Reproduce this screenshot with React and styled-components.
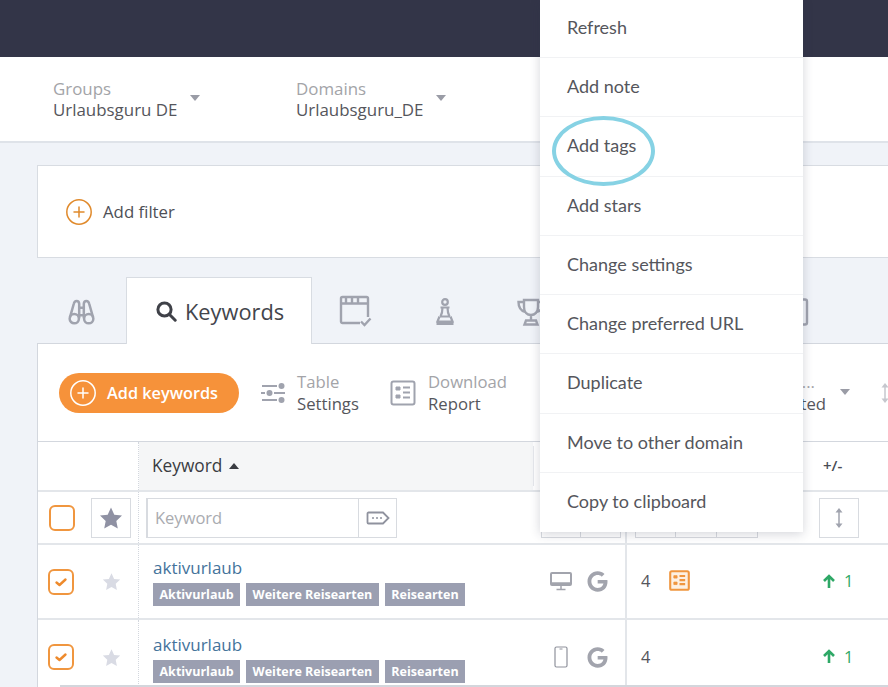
import styled, { createGlobalStyle } from 'styled-components';
import { FaGoogle } from 'react-icons/fa';

const GlobalStyle = createGlobalStyle`
  html, body {
    margin: 0;
    padding: 0;
    background: #f0f3f8;
  }
  body {
    font-family: "Open Sans", "Liberation Sans", sans-serif;
    color: #4a4c55;
  }
`;

const Page = styled.div`
  position: relative;
  width: 888px;
  height: 687px;
  overflow: hidden;
  background: #f0f3f8;
`;

const TopBar = styled.header`
  height: 57px;
  background: #333548;
`;

const SubHeader = styled.div`
  display: flex;
  box-sizing: border-box;
  height: 86px;
  padding: 21px 0 0 53px;
  background: #fff;
  border-bottom: 2px solid #dfe3e9;
`;

const Picker = styled.div`
  display: flex;
  width: 243px;
`;

const PickerText = styled.div`
  display: flex;
  flex-direction: column;
  font-size: 16.9px;
  line-height: 21px;
`;

const PickerLabel = styled.span`
  color: #a3a4a8;
`;

const PickerValue = styled.span`
  color: #55565c;
`;

const Caret = styled.span`
  width: 0;
  height: 0;
  margin: ${p => p.$top || 17}px 0 0 ${p => p.$left || 13}px;
  border-left: 5px solid transparent;
  border-right: 5px solid transparent;
  border-top: 6px solid #9a9ca6;
`;

const FilterCard = styled.section`
  display: flex;
  align-items: center;
  gap: 11px;
  box-sizing: border-box;
  height: 93px;
  margin: 22px 0 0 37px;
  padding-left: 28px;
  background: #fff;
  border: 1px solid #d8dce2;
  border-right: 0;
  font-size: 16.8px;
  color: #4e5056;
`;

const Tabs = styled.nav`
  display: flex;
  align-items: flex-end;
  height: 66px;
  margin-top: 19px;
  padding-left: 37px;
`;

const IconTab = styled.div`
  display: flex;
  flex: none;
  justify-content: center;
  align-items: center;
  box-sizing: border-box;
  width: ${p => p.$width}px;
  height: 66px;
  padding-top: 3px;
`;

const ActiveTab = styled.div`
  position: relative;
  z-index: 1;
  display: flex;
  flex: none;
  align-items: center;
  gap: 8px;
  box-sizing: border-box;
  width: 186px;
  height: 67px;
  margin-bottom: -1px;
  padding: 0 0 0 29px;
  background: #fff;
  border: 1px solid #d8dce2;
  border-bottom: 0;
  font-size: 21.8px;
  color: #43454c;
`;

const Panel = styled.main`
  margin-left: 37px;
  background: #fff;
  border-top: 1px solid #d3d7de;
  border-left: 1px solid #d3d7de;
`;

const Toolbar = styled.div`
  display: flex;
  align-items: center;
  box-sizing: border-box;
  height: 97px;
  padding-left: 21px;
`;

const AddButton = styled.button`
  display: flex;
  align-items: center;
  gap: 11px;
  box-sizing: border-box;
  width: 180px;
  height: 40px;
  margin: 0 22px 0 0;
  padding: 0 0 0 11px;
  background: #f6923a;
  border: 0;
  border-radius: 20px;
  color: #fff;
  font: 600 16.3px "Open Sans", sans-serif;
`;

const ToolAction = styled.div`
  display: flex;
  align-items: center;
  gap: ${p => p.$gap || 12}px;
  width: ${p => p.$width}px;
`;

const ToolText = styled.div`
  display: flex;
  flex-direction: column;
  font-size: 16.7px;
  line-height: 22px;
`;

const ToolHint = styled.span`
  color: #a3a4a8;
`;

const ToolMain = styled.span`
  color: #55565c;
`;

const ToolRight = styled.div`
  display: flex;
  align-items: center;
  margin-left: auto;
  margin-right: -2px;
`;

const Ghost = styled.div`
  display: flex;
  flex-direction: column;
  align-items: flex-end;
  font-size: 16.7px;
  line-height: 22px;
`;

const GhostDots = styled(ToolHint)`
  margin-right: 11px;
`;

const FaintSort = styled.span`
  display: flex;
  margin-left: 30px;
  opacity: 0.6;
`;

const TableRow = styled.div`
  display: grid;
  grid-template-columns: 101px 486px 1fr;
  box-sizing: border-box;
  height: ${p => p.$height}px;
  border-top: 2px solid #e3e6ea;
`;

const HeadRow = styled(TableRow)`
  border-top: 1px solid #d3d7de;
`;

const BaseCell = styled.div`
  display: flex;
  align-items: center;
  box-sizing: border-box;
`;

const MarkCell = styled(BaseCell)`
  border-right: 1px dotted #d3d7de;
`;

const HeadCell = styled(BaseCell)`
  position: relative;
  gap: 7px;
  padding: 0 0 2px 13px;
  background: linear-gradient(to right, #f5f6f7 394px, #fff 394px);
  font-size: 17.3px;
  color: #3a3c42;

  &::after {
    content: '';
    position: absolute;
    top: 4px;
    bottom: 4px;
    left: 394px;
    width: 1px;
    background: #e6e8ec;
  }
`;

const HeadEnd = styled(BaseCell)`
  padding: 0 0 2px 196px;
  border-left: 2px solid #e3e6ea;
  font-size: 15px;
  font-weight: 600;
  color: #4a4c55;
`;

const SortArrow = styled.span`
  width: 0;
  height: 0;
  margin-top: 2px;
  border-left: 5px solid transparent;
  border-right: 5px solid transparent;
  border-bottom: 6px solid #3a3c42;
`;

const CheckBox = styled.span`
  display: flex;
  justify-content: center;
  align-items: center;
  box-sizing: border-box;
  width: 26px;
  height: 26px;
  margin-left: ${p => p.$left}px;
  border: 2px solid #f0963f;
  border-radius: 6px;
`;

const StarBox = styled.span`
  display: flex;
  justify-content: center;
  align-items: center;
  box-sizing: border-box;
  width: 40px;
  height: 40px;
  margin-left: 16px;
  border: 1px solid #d8dbe0;
`;

const StarSlot = styled.span`
  display: flex;
  margin-left: 28px;
`;

const FilterCell = styled(BaseCell)`
  padding-left: 7px;
`;

const KeywordInput = styled.div`
  display: flex;
  align-items: center;
  box-sizing: border-box;
  width: 212px;
  height: 40px;
  padding: 0 0 1px 7px;
  border: 1px solid #d8dbe0;
  border-width: 1px 0 1px 2px;
  font-size: 16.5px;
  color: #a9abb0;
`;

const TagButton = styled.div`
  display: flex;
  justify-content: center;
  align-items: center;
  box-sizing: border-box;
  width: 39px;
  height: 40px;
  border: 1px solid #d8dbe0;
`;

const RangeBox = styled.div`
  box-sizing: border-box;
  width: ${p => p.$width}px;
  height: 40px;
  margin-left: ${p => p.$left || 0}px;
  border: 1px solid #d8dbe0;
  border-left-width: ${p => p.$left ? 1 : 0}px;
`;

const FilterEnd = styled(BaseCell)`
  padding-left: 7px;
  border-left: 2px solid #e3e6ea;
`;

const SortBox = styled.div`
  display: flex;
  justify-content: center;
  align-items: center;
  box-sizing: border-box;
  width: 40px;
  height: 40px;
  margin-left: 61px;
  border: 1px solid #d8dbe0;
`;

const KeywordCell = styled.div`
  position: relative;
  display: flex;
  flex-direction: column;
  padding: ${p => p.$top}px 0 0 14px;
`;

const KeywordLink = styled.a`
  font-size: 17px;
  line-height: 22px;
  color: #44739b;
`;

const TagList = styled.div`
  display: flex;
  gap: 6px;
  margin-top: 4px;
`;

const Tag = styled.span`
  padding: 0 6.5px;
  background: #9b9fb1;
  color: #fff;
  font-size: 12.5px;
  font-weight: 700;
  line-height: 23px;
`;

const Engine = styled.div`
  position: absolute;
  top: ${p => p.$top}px;
  right: 17px;
  display: flex;
  align-items: center;
  gap: 15px;
  color: #a2a4ad;
`;

const RankCell = styled(BaseCell)`
  padding: 0 0 2px 14px;
  border-left: 2px solid #e3e6ea;
  font-size: 16.5px;
  color: #55565c;
`;

const RankValue = styled.span`
  width: 28px;
`;

const Trend = styled.span`
  position: absolute;
  left: 823px;
  display: flex;
  align-items: center;
  gap: 9px;
  color: #2ea866;
`;

const Menu = styled.ul`
  position: absolute;
  top: 0;
  left: 540px;
  z-index: 5;
  width: 263px;
  margin: 0;
  padding: 0;
  list-style: none;
  background: #fff;
  box-shadow: 0 2px 10px rgba(40, 45, 70, 0.2);
`;

const MenuItem = styled.li`
  display: flex;
  align-items: center;
  box-sizing: border-box;
  height: 59.25px;
  padding: 0 0 2px 27px;
  border-top: 1px solid #f1f2f4;
  font-family: "Lato", "Open Sans", sans-serif;
  font-size: 18px;
  color: #55565c;

  &:first-child {
    height: 57px;
    padding-bottom: 3px;
    border-top: 0;
  }
  &:last-child {
    height: 60px;
  }
`;

const Highlight = styled.span`
  position: absolute;
  top: 116px;
  left: 552px;
  z-index: 6;
  box-sizing: border-box;
  width: 103px;
  height: 70px;
  border: 4px solid #86d2e4;
  border-radius: 50%;
`;

const BottomEdge = styled.span`
  position: absolute;
  left: 60px;
  right: 0;
  bottom: 0;
  height: 2px;
  background: #d3d6dc;
`;

function Star({ size, color }) {
  return (
    <svg width={size} height={size} viewBox="0 0 24 24" fill={color}>
      <path d="M12 1.5l3.3 7.2 7.7.9-5.7 5.3 1.5 7.7L12 18.8l-6.8 3.8 1.5-7.7L1 9.6l7.7-.9z" />
    </svg>
  );
}

function Tick() {
  return (
    <svg width="14" height="12" viewBox="0 0 14 12" fill="none" stroke="#ee8a2c" strokeWidth="2.4" strokeLinecap="round" strokeLinejoin="round">
      <path d="M2.5 6.5l3 2.5 6-5.5" />
    </svg>
  );
}

function PlusCircle({ color, size = 26 }) {
  return (
    <svg width={size} height={size} viewBox="0 0 26 26" fill="none" stroke={color} strokeWidth="1.5">
      <circle cx="13" cy="13" r="12.2" />
      <path d="M13 8v10M8 13h10" strokeLinecap="round" />
    </svg>
  );
}

function Binoculars() {
  return (
    <svg width="27" height="26" viewBox="0 0 28 27" fill="none" stroke="#a0a3ae" strokeWidth="2.6">
      <circle cx="6.5" cy="20.5" r="4.8" />
      <circle cx="21.5" cy="20.5" r="4.8" />
      <path d="M2 19L6 5q.6-3 3-3t2.6 3v15M26 19L22 5q-.6-3-3-3t-2.6 3v15M11.5 9h5M11.5 17h5" />
    </svg>
  );
}

function SearchIcon() {
  return (
    <svg width="21" height="21" viewBox="0 0 21 21" fill="none" stroke="#3f4148" strokeWidth="3">
      <circle cx="8.5" cy="8.5" r="6.6" />
      <path d="M13.5 13.5l5.7 5.7" strokeLinecap="round" />
    </svg>
  );
}

function BrowserCheck() {
  return (
    <svg width="33" height="33" viewBox="0 0 33 33" fill="none" stroke="#a0a3ae" strokeWidth="2.4">
      <path d="M21 28H3.500a1.500 1.500 0 0 1-1.500-1.500v-23A1.500 1.500 0 0 1 3.500 2h24A1.500 1.500 0 0 1 29 3.500V22" />
      <path d="M2 8.500h27M7 2v6.500M13 2v6.500M19 2v6.500" />
      <path d="M22 26.500l3.500 3.500 6-6.500" />
    </svg>
  );
}

function Pawn() {
  return (
    <svg width="20" height="28" viewBox="0 0 20 28" fill="none" stroke="#a0a3ae" strokeWidth="2.2">
      <circle cx="10" cy="4" r="2.800" />
      <path d="M5.500 9.500h9M7.500 9.500c0 3.500-.5 6-2 9M12.500 9.500c0 3.500.5 6 2 9M5 18.500h10" />
      <path d="M4.500 18.500l-2 5h15l-2-5" />
      <path d="M1.500 25.500h17" strokeWidth="3" />
    </svg>
  );
}

function Trophy() {
  return (
    <svg width="28" height="28" viewBox="0 0 28 28" fill="none" stroke="#a0a3ae" strokeWidth="2.4">
      <path d="M7 2h14v7c0 5-3 8-7 8s-7-3-7-8zM7 4H1.500c0 6 2.500 9 7 10M21 4h5.500c0 6-2.500 9-7 10M14 17v5" />
      <path d="M9 22.500h10l1.500 4h-13z" />
    </svg>
  );
}

function ClipTab() {
  return (
    <svg width="22" height="28" viewBox="0 0 22 28" fill="none" stroke="#a0a3ae" strokeWidth="2.4">
      <rect x="2" y="1.500" width="18" height="25" rx="2" />
    </svg>
  );
}

function Sliders() {
  return (
    <svg width="24" height="20" viewBox="0 0 24 20" fill="#a0a3ae" stroke="#a0a3ae">
      <path d="M1 3h15M1 17h15M0 10h4M13 10h11" strokeWidth="1.800" />
      <circle cx="20.500" cy="3" r="3" stroke="none" />
      <circle cx="8.500" cy="10" r="3" stroke="none" />
      <circle cx="20.500" cy="17" r="3" stroke="none" />
    </svg>
  );
}

function ReportIcon({ color = '#a0a3ae', size = 26, tint = 'none', strokeWidth = 2 }) {
  return (
    <svg width={size} height={size} viewBox="0 0 26 26" fill={tint} stroke={color} strokeWidth={strokeWidth}>
      <rect x="1.500" y="1.500" width="23" height="23" rx="2" />
      <path d="M6 7h4v3H6zM6 15h4v3H6z" fill={color} strokeWidth="1" />
      <path d="M13 7.500h7M13 12.500h7M13 17.500h7" fill="none" />
    </svg>
  );
}

function TagIcon() {
  return (
    <svg width="24" height="14" viewBox="0 0 24 14" fill="none" stroke="#8f929e" strokeWidth="1.800">
      <path d="M2.500 1.500h14.500l5.500 5.500-5.500 5.500H2.500a1 1 0 0 1-1-1v-9a1 1 0 0 1 1-1z" />
      <path d="M7 7h.01M11 7h.01M15 7h.01" strokeWidth="2" strokeLinecap="round" />
    </svg>
  );
}

function SortIcon() {
  return (
    <svg width="10" height="22" viewBox="0 0 10 22" fill="#a0a3ae" stroke="#a0a3ae">
      <path d="M5 3v16" strokeWidth="1.500" />
      <path d="M5 1l3.500 4.500h-7zM5 21l3.500-4.500h-7z" stroke="none" />
    </svg>
  );
}

function Desktop() {
  return (
    <svg width="22" height="19" viewBox="0 0 22 19" fill="none" stroke="#a2a4ad" strokeWidth="2">
      <rect x="1" y="1" width="20" height="12" rx="1" />
      <path d="M1 11.500h20" strokeWidth="2.500" />
      <path d="M11 14v3M6.500 17.500h9" strokeWidth="1.500" />
    </svg>
  );
}

function Phone() {
  return (
    <svg width="22" height="22" viewBox="0 0 22 22" fill="none" stroke="#8f929c" strokeWidth="1.200">
      <rect x="5" y="1" width="12" height="20" rx="1.500" />
      <path d="M9.500 3h3M11 18.500h.01" />
    </svg>
  );
}

function UpArrow() {
  return (
    <svg width="12" height="14" viewBox="0 0 12 14" fill="none" stroke="#2ea866" strokeWidth="2.600">
      <path d="M6 14V2M1 7l5-5 5 5" />
    </svg>
  );
}

const rows = [
  { id: 1, device: <Desktop />, height: 75, top: 12, engineTop: 26, note: true },
  { id: 2, device: <Phone />, height: 76, top: 14, engineTop: 26, note: false },
];

const tags = ['Aktivurlaub', 'Weitere Reisearten', 'Reisearten'];

const menuItems = [
  'Refresh',
  'Add note',
  'Add tags',
  'Add stars',
  'Change settings',
  'Change preferred URL',
  'Duplicate',
  'Move to other domain',
  'Copy to clipboard',
];

export default function App() {
  return (
    <Page>
      <GlobalStyle />
      <TopBar />
      <SubHeader>
        <Picker>
          <PickerText>
            <PickerLabel>Groups</PickerLabel>
            <PickerValue>Urlaubsguru DE</PickerValue>
          </PickerText>
          <Caret />
        </Picker>
        <Picker>
          <PickerText>
            <PickerLabel>Domains</PickerLabel>
            <PickerValue>Urlaubsguru_DE</PickerValue>
          </PickerText>
          <Caret />
        </Picker>
      </SubHeader>

      <FilterCard>
        <PlusCircle color="#e08a2c" />
        Add filter
      </FilterCard>

      <Tabs>
        <IconTab $width={89}><Binoculars /></IconTab>
        <ActiveTab><SearchIcon />Keywords</ActiveTab>
        <IconTab $width={87}><BrowserCheck /></IconTab>
        <IconTab $width={91}><Pawn /></IconTab>
        <IconTab $width={81}><Trophy /></IconTab>
        <IconTab $width={454}><ClipTab /></IconTab>
      </Tabs>

      <Panel>
        <Toolbar>
          <AddButton><PlusCircle color="#fff" />Add keywords</AddButton>
          <ToolAction $width={129}>
            <Sliders />
            <ToolText>
              <ToolHint>Table</ToolHint>
              <ToolMain>Settings</ToolMain>
            </ToolText>
          </ToolAction>
          <ToolAction>
            <ReportIcon />
            <ToolText>
              <ToolHint>Download</ToolHint>
              <ToolMain>Report</ToolMain>
            </ToolText>
          </ToolAction>
          <ToolRight>
            <Ghost>
              <GhostDots>...</GhostDots>
              <ToolMain>Selected</ToolMain>
            </Ghost>
            <Caret $top={-2} $left={14} />
            <FaintSort><SortIcon /></FaintSort>
          </ToolRight>
        </Toolbar>

        <HeadRow $height={49}>
          <MarkCell />
          <HeadCell>Keyword<SortArrow /></HeadCell>
          <HeadEnd>+/-</HeadEnd>
        </HeadRow>

        <TableRow $height={53}>
          <MarkCell>
            <CheckBox $left={11} />
            <StarBox><Star size={24} color="#8f91a3" /></StarBox>
          </MarkCell>
          <FilterCell>
            <KeywordInput>Keyword</KeywordInput>
            <TagButton><TagIcon /></TagButton>
            <RangeBox $width={40} $left={144} />
            <RangeBox $width={40} />
          </FilterCell>
          <FilterEnd>
            <RangeBox $width={41} $left={1} />
            <RangeBox $width={41} />
            <RangeBox $width={41} />
            <SortBox><SortIcon /></SortBox>
          </FilterEnd>
        </TableRow>

        {rows.map(row => (
          <TableRow key={row.id} $height={row.height}>
            <MarkCell>
              <CheckBox $left={10}><Tick /></CheckBox>
              <StarSlot><Star size={19} color="#d9dbe4" /></StarSlot>
            </MarkCell>
            <KeywordCell $top={row.top}>
              <KeywordLink>aktivurlaub</KeywordLink>
              <TagList>
                {tags.map(tag => <Tag key={tag}>{tag}</Tag>)}
              </TagList>
              <Engine $top={row.engineTop}>
                {row.device}
                <FaGoogle size={21} />
              </Engine>
            </KeywordCell>
            <RankCell>
              <RankValue>4</RankValue>
              {row.note && <ReportIcon color="#f0963f" size={21} tint="#fdf0e2" strokeWidth={2.6} />}
              <Trend><UpArrow />1</Trend>
            </RankCell>
          </TableRow>
        ))}
      </Panel>

      <Menu>
        {menuItems.map(item => <MenuItem key={item}>{item}</MenuItem>)}
      </Menu>
      <Highlight />
      <BottomEdge />
    </Page>
  );
}
